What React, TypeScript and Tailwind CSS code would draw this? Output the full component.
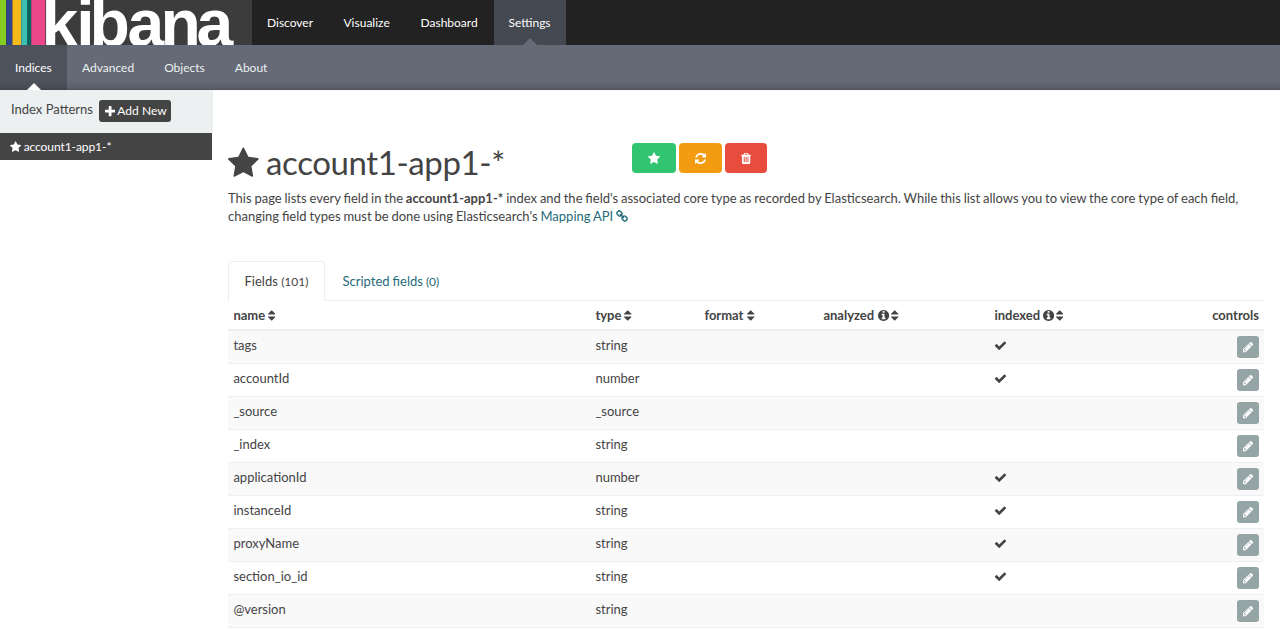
import React from "react";

type Glyph = { x: number; w: number; d: string };

const glyphs: Record<string, Glyph> = {
  star: { x: 64, w: 1664, d: "M1728 647q0 22-26 48l-363 354 86 500q1 7 1 20 0 21-10.5 35.5t-30.5 14.5q-19 0-40-12l-449-236-449 236q-22 12-40 12-21 0-31.5-14.5t-10.5-35.5q0-6 2-20l86-500-364-354q-25-27-25-48 0-37 56-46l502-73 225-455q19-41 49-41t49 41l225 455 502 73q56 9 56 46z" },
  refresh: { x: 128, w: 1536, d: "M1639 1056q0 5-1 7-64 268-268 434.500t-478 166.500q-146 0-282.500-55t-243.500-157l-129 129q-19 19-45 19t-45-19-19-45v-448q0-26 19-45t45-19h448q26 0 45 19t19 45-19 45l-137 137q71 66 161 102t187 36q134 0 250-65t186-179q11-17 53-117 8-23 30-23h192q13 0 22.500 9.500t9.500 22.500zm25-800v448q0 26-19 45t-45 19h-448q-26 0-45-19t-19-45 19-45l138-138q-148-137-349-137-134 0-250 65t-186 179q-11 17-53 117-8 23-30 23h-199q-13 0-22.500-9.500t-9.500-22.500v-7q65-268 270-434.500t480-166.500q146 0 284 55.500t245 156.500l130-129q19-19 45-19t45 19 19 45z" },
  trash: { x: 192, w: 1408, d: "M704 1376v-704q0-14-9-23t-23-9h-64q-14 0-23 9t-9 23v704q0 14 9 23t23 9h64q14 0 23-9t9-23zm256 0v-704q0-14-9-23t-23-9h-64q-14 0-23 9t-9 23v704q0 14 9 23t23 9h64q14 0 23-9t9-23zm256 0v-704q0-14-9-23t-23-9h-64q-14 0-23 9t-9 23v704q0 14 9 23t23 9h64q14 0 23-9t9-23zm-544-992h448l-48-117q-7-9-17-11h-317q-10 2-17 11zm928 32v64q0 14-9 23t-23 9h-96v948q0 83-47 143.500t-113 60.500h-832q-66 0-113-58.500t-47-141.500v-952h-96q-14 0-23-9t-9-23v-64q0-14 9-23t23-9h309l70-167q15-37 54-63t79-26h320q40 0 79 26t54 63l70 167h309q14 0 23 9t9 23z" },
  plus: { x: 192, w: 1408, d: "M1600 736v192q0 40-28 68t-68 28h-416v416q0 40-28 68t-68 28h-192q-40 0-68-28t-28-68v-416h-416q-40 0-68-28t-28-68v-192q0-40 28-68t68-28h416v-416q0-40 28-68t68-28h192q40 0 68 28t28 68v416h416q40 0 68 28t28 68z" },
  check: { x: 0, w: 1792, d: "M1671 566q0 40-28 68l-724 724-136 136q-28 28-68 28t-68-28l-136-136-362-362q-28-28-28-68t28-68l136-136q28-28 68-28t68 28l294 295 656-657q28-28 68-28t68 28l136 136q28 28 28 68z" },
  sort: { x: 384, w: 1024, d: "M1408 1088q0 26-19 45l-448 448q-19 19-45 19t-45-19l-448-448q-19-19-19-45t19-45 45-19h896q26 0 45 19t19 45zm0-384q0 26-19 45t-45 19h-896q-26 0-45-19t-19-45 19-45l448-448q19-19 45-19t45 19l448 448q19 19 19 45z" },
  info: { x: 128, w: 1536, d: "M1152 1376v-160q0-14-9-23t-23-9h-96v-512q0-14-9-23t-23-9h-320q-14 0-23 9t-9 23v160q0 14 9 23t23 9h96v320h-96q-14 0-23 9t-9 23v160q0 14 9 23t23 9h448q14 0 23-9t9-23zm-128-896v-160q0-14-9-23t-23-9h-192q-14 0-23 9t-9 23v160q0 14 9 23t23 9h192q14 0 23-9t9-23zm640 416q0 209-103 385.500t-279.500 279.500-385.500 103-385.500-103-279.500-279.500-103-385.500 103-385.500 279.500-279.500 385.500-103 385.500 103 279.500 279.500 103 385.500z" },
  pencil: { x: 128, w: 1536, d: "M491 1536l91-91-235-235-91 91v107h128v128h107zm523-928q0-22-22-22-10 0-17 7l-542 542q-7 7-7 17 0 22 22 22 10 0 17-7l542-542q7-7 7-17zm-54-192l416 416-832 832h-416v-416zm683 96q0 53-37 90l-166 166-416-416 166-165q36-38 90-38 53 0 91 38l235 234q37 39 37 91z" },
  chain: { x: 64, w: 1664, d: "M1520 1216q0-40-28-68l-208-208q-28-28-68-28-42 0-72 32 3 3 19 18.500t21.500 21.500 15 19 13 25.500 3.500 27.500q0 40-28 68t-68 28q-15 0-27.500-3.500t-25.500-13-19-15-21.500-21.500-18.500-19q-33 31-33 73 0 40 28 68l206 207q27 27 68 27 40 0 68-26l147-146q28-28 28-67zm-703-705q0-40-28-68l-206-207q-28-28-68-28-39 0-68 27l-147 146q-28 28-28 67 0 40 28 68l208 208q27 27 68 27 42 0 72-31-3-3-19-18.500t-21.500-21.500-15-19-13-25.500-3.500-27.500q0-40 28-68t68-28q15 0 27.500 3.500t25.500 13 19 15 21.500 21.500 18.500 19q33-31 33-73zm895 705q0 120-85 203l-147 146q-83 83-203 83-121 0-204-85l-206-207q-83-83-83-203 0-123 88-209l-88-88q-86 88-208 88-120 0-204-84l-208-208q-84-84-84-204t85-203l147-146q83-83 203-83 121 0 204 85l206 207q83 83 83 203 0 123-88 209l88 88q86-88 208-88 120 0 204 84l208 208q84 84 84 204z" },
};

function Icon({ name, className = "" }: { name: string; className?: string }) {
  const g = glyphs[name];
  return (
    <svg
      viewBox={`${g.x} 0 ${g.w} 1792`}
      style={{ width: `${g.w / 1792}em` }}
      className={`inline-block h-[1em] shrink-0 fill-current align-[-0.143em] ${className}`}
      aria-hidden="true"
    >
      <path d={g.d} />
    </svg>
  );
}

function Logo() {
  return (
    <svg width="252" height="45" viewBox="0 0 252 45" className="block shrink-0 bg-[#3c3c3c]">
      <rect x="0" width="6" height="45" fill="#85cd21" />
      <rect x="6.500" width="5.500" height="45" fill="#2f4590" />
      <rect x="12.500" width="8.500" height="45" fill="#f5bb1a" />
      <rect x="21.300" width="6" height="45" fill="#3dbfb3" />
      <rect x="27.300" width="3.700" height="45" fill="#05645d" />
      <rect x="31.300" width="14" height="45" fill="#ed478c" />
      <text x="41.6 76.3 89.6 127.6 160.5 196.6" y="45.8" fontFamily="Liberation Sans, Arial, sans-serif" fontWeight="700" fontSize="66" fill="#fff">
        kibana
      </text>
    </svg>
  );
}

const subNav = ["Advanced", "Objects", "About"];

const rows: [string, string, boolean][] = [
  ["tags", "string", true],
  ["accountId", "number", true],
  ["_source", "_source", false],
  ["_index", "string", false],
  ["applicationId", "number", true],
  ["instanceId", "string", true],
  ["proxyName", "string", true],
  ["section_io_id", "string", true],
  ["@version", "string", false],
];

const columns = "grid grid-cols-[362px_109px_119px_171px_1fr] pl-[5.4px] pr-[5px]";

export default function App() {
  return (
    <div className="flex h-[630px] w-[1280px] flex-col overflow-hidden bg-white font-['Lato',sans-serif] text-[13px] leading-[18.570px] text-[#444]">
      <header className="flex h-[45px] shrink-0 bg-[#222] text-white">
        <Logo />
        <nav className="flex text-[12px] leading-[45px]">
          <a className="w-[76px] pl-[15px]">Discover</a>
          <a className="w-[77px] pl-[15.500px]">Visualize</a>
          <a className="w-[89px] pl-[15.500px]">Dashboard</a>
          <a className="relative w-[72px] bg-[#444850] pl-[14.500px]">
            Settings
            <span className="absolute bottom-0 left-[29px] border-x-[7px] border-b-[7px] border-x-transparent border-b-[#656a76]" />
          </a>
        </nav>
      </header>
      <nav className="flex h-[45px] shrink-0 bg-[linear-gradient(to_bottom,#656a76_0px,#656a76_36px,#5b5f69_43px,#4c4f58_45px)] text-[12px] leading-[45px] text-[#ecf0f1]">
        <a className="relative w-[67px] bg-[linear-gradient(to_bottom,#4d525d_36px,#474b55_43px,#3d4048_45px)] pl-[15px] text-white">
          Indices
          <span className="absolute bottom-0 left-[27px] border-x-[7px] border-b-[7px] border-x-transparent border-b-white" />
        </a>
        {subNav.map((label) => (
          <a key={label} className="px-[15px]">
            {label}
          </a>
        ))}
      </nav>
      <div className="flex min-h-0 flex-1">
        <aside className="w-[213px] shrink-0">
          <div className="flex h-[43px] bg-[#ecf0f1] pl-[11px] pt-[10px]">
            <span className="w-[88px]">Index Patterns</span>
            <button className="flex h-[22px] w-[72px] items-center gap-[2px] rounded-[3px] bg-[#444] pl-[6px] text-[12px] text-white">
              <Icon name="plus" className="text-[13px]" />
              <span className="tracking-[0.05px]">Add New</span>
            </button>
          </div>
          <div className="h-[27px] w-[212px] bg-[#444] pl-[10px] pt-[5px] text-[12px] leading-[17px] tracking-[-0.08px] text-white [word-spacing:-0.5px]">
            <Icon name="star" /> account1-app1-*
          </div>
        </aside>
        <main className="flex min-w-0 flex-1 flex-col pl-[15px] pr-[15px]">
          <div className="flex h-[99px] pt-[53px]">
            <h1 className="-mt-px w-[404px] text-[33px] leading-[40px]">
              <Icon name="star" /> <span className="-ml-px tracking-[-0.4px]">account1-app1-*</span>
            </h1>
            <div className="flex gap-[3px] text-[13px] text-white">
              <button className="flex h-[30px] w-[44px] items-center justify-center rounded-[4px] bg-[#31c471]"><Icon name="star" /></button>
              <button className="flex h-[30px] w-[43px] items-center justify-center rounded-[4px] bg-[#f39c12]"><Icon name="refresh" /></button>
              <button className="flex h-[30px] w-[42px] items-center justify-center rounded-[4px] bg-[#e74c3c]"><Icon name="trash" /></button>
            </div>
          </div>
          <p className="h-[72px] leading-[18px] [word-spacing:-0.49px]">
            This page lists every field in the <strong>account1-app1-*</strong> index and the field's associated core type as recorded by Elasticsearch. While this list allows you to view the core type of each field, changing field types must be done using Elasticsearch's{" "}
            <a className="text-[#1f6b7a]">Mapping API <Icon name="chain" /></a>
          </p>
          <div className="flex h-[40px] w-[1037px] shrink-0 border-b border-[#ecf0f1]">
            <a className="h-[40px] w-[97px] rounded-t-[4px] border border-b-0 border-[#ecf0f1] bg-white pl-[15.500px] pt-[10px]">
              Fields <small className="text-[12px]">(101)</small>
            </a>
            <a className="pl-[17.500px] pt-[11px] text-[#1f6b7a] [word-spacing:-0.3px]">
              Scripted fields <small className="text-[12px]">(0)</small>
            </a>
          </div>
          <div className="w-[1036px]">
            <div className={`${columns} h-[30px] border-b-2 border-[#ecf0f1] pt-[5px] font-bold`}>
              <span>name <Icon name="sort" className="-ml-[0.500px]" /></span>
              <span>type <Icon name="sort" className="-ml-[0.500px]" /></span>
              <span>format <Icon name="sort" className="ml-[0.500px]" /></span>
              <span>analyzed <Icon name="info" className="ml-[0.500px]" /> <Icon name="sort" className="-ml-[1px]" /></span>
              <span className="flex justify-between">
                <span>indexed <Icon name="info" className="-ml-[0.500px]" /> <Icon name="sort" className="-ml-[1px]" /></span>
                <span>controls</span>
              </span>
            </div>
            {rows.map(([name, type, indexed]) => (
              <div key={name} className={`${columns} h-[33px] border-b border-[#ecf0f1] pt-[5px] odd:bg-white even:bg-[#f9f9f9]`}>
                <span>{name}</span>
                <span>{type}</span>
                <span />
                <span />
                <span className="flex justify-between">
                  <span>{indexed && <Icon name="check" />}</span>
                  <button className="flex h-[22px] w-[22px] items-center justify-center rounded-[3px] bg-[#95a5a6] text-[12px] text-white">
                    <Icon name="pencil" />
                  </button>
                </span>
              </div>
            ))}
          </div>
        </main>
      </div>
    </div>
  );
}
